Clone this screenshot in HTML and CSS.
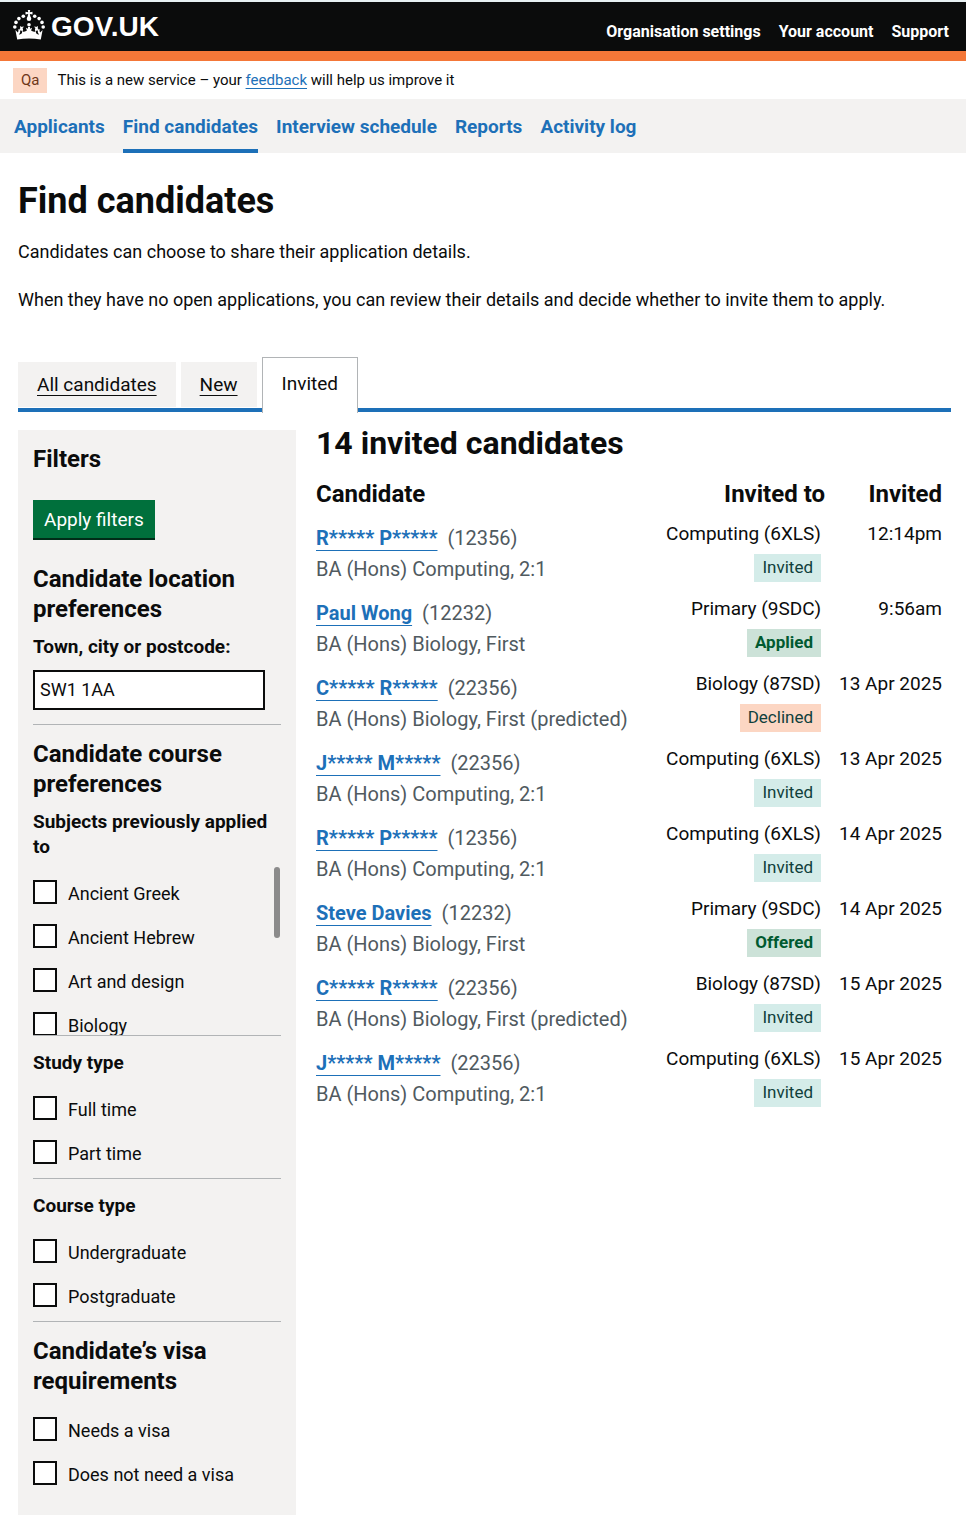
FILE: index.html
```html
<!DOCTYPE html>
<html lang="en">
<head>
<meta charset="utf-8">
<title>Find candidates - GOV.UK</title>
<meta name="viewport" content="width=device-width, initial-scale=1">
<link rel="stylesheet" href="styles.css">
</head>
<body>
<header class="header">
  <a class="brand" href="#">
    <svg class="crown" viewBox="0 0 32 30" width="32" height="30" fill="#fff" aria-hidden="true">
      <path d="M14.800 0h2.400l-.4 2.300 2.700-.5v2.800l-2.700-.5.800 3.400h-3.200l.8-3.400-2.700.5V1.800l2.700.5z"/>
      <circle cx="16" cy="8.800" r="2.300"/>
      <circle cx="10.300" cy="6.200" r="1.800"/><circle cx="21.700" cy="6.200" r="1.800"/>
      <circle cx="5.900" cy="8.600" r="1.800"/><circle cx="26.100" cy="8.600" r="1.800"/>
      <circle cx="3" cy="12.400" r="1.800"/><circle cx="29" cy="12.400" r="1.800"/>
      <circle cx="1.800" cy="17" r="1.800"/><circle cx="30.200" cy="17" r="1.800"/>
      <circle cx="16" cy="14.800" r="1.800"/>
      <path d="M4.200 29.500 2.400 20l2.500 2.400c.6-1.200.7-2.200.3-3.400 1.300.5 2 1.500 2 2.800 0 1.100-.6 2-1.400 2.600 1.300.3 2.700-.3 3.200-1.600.3-1-.1-1.900-.9-2.200-.8-.2-1.300.3-1.600.8-.5-1.500.1-2.700 1.100-3.400-.6-.4-.8-1.100-.5-1.800.7 0 1.300.2 1.700.8.500-.5 1.200-.7 1.900-.4-.1.700-.5 1.300-1.200 1.500.7.900.8 2.200-.1 3.300 1.700.5 3.400.2 4.500-.9l-1-2.700 2.100.9v-1.800h2v1.800l2.100-.9-1 2.700c1.100 1.100 2.800 1.400 4.500.9-.9-1.100-.8-2.400-.1-3.300-.7-.2-1.100-.8-1.200-1.500.7-.3 1.400-.1 1.900.4.400-.6 1-.8 1.700-.8.300.7.100 1.400-.5 1.800 1 .7 1.600 1.900 1.100 3.400-.3-.5-.8-1-1.600-.8-.8.300-1.200 1.200-.9 2.200.5 1.300 1.900 1.900 3.200 1.600-.8-.6-1.400-1.500-1.400-2.600 0-1.300.7-2.300 2-2.800-.4 1.200-.3 2.200.3 3.400l2.500-2.400-1.800 9.500c-7.600-1.300-16-1.300-23.600 0z"/>
    </svg>
    <span class="brand-name">GOV.UK</span>
  </a>
  <nav class="account-nav" aria-label="Account">
    <a href="#">Organisation settings</a>
    <a href="#">Your account</a>
    <a href="#">Support</a>
  </nav>
</header>
<div class="phase">
  <strong class="phase-tag">Qa</strong>
  <span>This is a new service – your <a class="link" href="#">feedback</a> will help us improve it</span>
</div>
<nav class="primary-nav" aria-label="Primary">
  <a href="#">Applicants</a>
  <a class="current" href="#" aria-current="page">Find candidates</a>
  <a href="#">Interview schedule</a>
  <a href="#">Reports</a>
  <a href="#">Activity log</a>
</nav>
<main class="main">
  <h1>Find candidates</h1>
  <p>Candidates can choose to share their application details.</p>
  <p>When they have no open applications, you can review their details and decide whether to invite them to apply.</p>
  <nav class="tabs" aria-label="Candidate lists">
    <a class="tab" href="#">All candidates</a>
    <a class="tab" href="#">New</a>
    <a class="tab selected" href="#" aria-current="page">Invited</a>
  </nav>
  <div class="columns">
    <form class="filters">
      <h2>Filters</h2>
      <button class="button" type="button">Apply filters</button>
      <section class="group first">
        <h2>Candidate location preferences</h2>
        <label class="field-label" for="town">Town, city or postcode:</label>
        <input class="text-input" id="town" type="text" value="SW1 1AA">
      </section>
      <section class="group course">
        <h2>Candidate course preferences</h2>
        <fieldset>
          <legend>Subjects previously applied to</legend>
          <div class="scroll-area">
            <div class="scroll-list">
              <div class="check"><input type="checkbox" id="greek"><label for="greek">Ancient Greek</label></div>
              <div class="check"><input type="checkbox" id="hebrew"><label for="hebrew">Ancient Hebrew</label></div>
              <div class="check"><input type="checkbox" id="art"><label for="art">Art and design</label></div>
              <div class="check"><input type="checkbox" id="biology"><label for="biology">Biology</label></div>
            </div>
            <span class="thumb"></span>
          </div>
        </fieldset>
      </section>
      <fieldset class="group">
        <legend>Study type</legend>
        <div class="checks">
          <div class="check"><input type="checkbox" id="full"><label for="full">Full time</label></div>
          <div class="check"><input type="checkbox" id="part"><label for="part">Part time</label></div>
        </div>
      </fieldset>
      <fieldset class="group">
        <legend>Course type</legend>
        <div class="checks">
          <div class="check"><input type="checkbox" id="under"><label for="under">Undergraduate</label></div>
          <div class="check"><input type="checkbox" id="post"><label for="post">Postgraduate</label></div>
        </div>
      </fieldset>
      <section class="group">
        <h2>Candidate’s visa requirements</h2>
        <div class="checks">
          <div class="check"><input type="checkbox" id="visa"><label for="visa">Needs a visa</label></div>
          <div class="check"><input type="checkbox" id="novisa"><label for="novisa">Does not need a visa</label></div>
        </div>
      </section>
    </form>
    <section class="results">
      <h2 class="results-title">14 invited candidates</h2>
      <table>
        <thead>
          <tr><th scope="col">Candidate</th><th scope="col" class="to">Invited to</th><th scope="col" class="when">Invited</th></tr>
        </thead>
        <tbody>
          <tr>
            <td><div class="who"><a href="#">R***** P*****</a><span>(12356)</span></div><div class="degree">BA (Hons) Computing, 2:1</div></td>
            <td class="to">Computing (6XLS)<div><span class="tag">Invited</span></div></td><td class="when">12:14pm</td>
          </tr>
          <tr>
            <td><div class="who"><a href="#">Paul Wong</a><span>(12232)</span></div><div class="degree">BA (Hons) Biology, First</div></td>
            <td class="to">Primary (9SDC)<div><strong class="tag green">Applied</strong></div></td><td class="when">9:56am</td>
          </tr>
          <tr>
            <td><div class="who"><a href="#">C***** R*****</a><span>(22356)</span></div><div class="degree">BA (Hons) Biology, First (predicted)</div></td>
            <td class="to">Biology (87SD)<div><span class="tag orange">Declined</span></div></td><td class="when">13 Apr 2025</td>
          </tr>
          <tr>
            <td><div class="who"><a href="#">J***** M*****</a><span>(22356)</span></div><div class="degree">BA (Hons) Computing, 2:1</div></td>
            <td class="to">Computing (6XLS)<div><span class="tag">Invited</span></div></td><td class="when">13 Apr 2025</td>
          </tr>
          <tr>
            <td><div class="who"><a href="#">R***** P*****</a><span>(12356)</span></div><div class="degree">BA (Hons) Computing, 2:1</div></td>
            <td class="to">Computing (6XLS)<div><span class="tag">Invited</span></div></td><td class="when">14 Apr 2025</td>
          </tr>
          <tr>
            <td><div class="who"><a href="#">Steve Davies</a><span>(12232)</span></div><div class="degree">BA (Hons) Biology, First</div></td>
            <td class="to">Primary (9SDC)<div><strong class="tag green">Offered</strong></div></td><td class="when">14 Apr 2025</td>
          </tr>
          <tr>
            <td><div class="who"><a href="#">C***** R*****</a><span>(22356)</span></div><div class="degree">BA (Hons) Biology, First (predicted)</div></td>
            <td class="to">Biology (87SD)<div><span class="tag">Invited</span></div></td><td class="when">15 Apr 2025</td>
          </tr>
          <tr>
            <td><div class="who"><a href="#">J***** M*****</a><span>(22356)</span></div><div class="degree">BA (Hons) Computing, 2:1</div></td>
            <td class="to">Computing (6XLS)<div><span class="tag">Invited</span></div></td><td class="when">15 Apr 2025</td>
          </tr>
        </tbody>
      </table>
    </section>
  </div>
</main>
</body>
</html>
```
FILE: styles.css
```css
* { box-sizing: border-box; }
body {
  margin: 0;
  color: #0b0c0c;
  background: #fff;
  font: 18px/25px Roboto, "Liberation Sans", sans-serif;
}
h1, h2, p { margin: 0; }
fieldset { border: 0; margin: 0; padding: 0; min-width: 0; }
legend { padding: 0; font-size: 19px; font-weight: 700; }

.header {
  display: flex;
  justify-content: space-between;
  align-items: center;
  height: 61px;
  padding: 0 17px 0 13px;
  border-top: 2px solid #e8f1f3;
  border-bottom: 10px solid #f47738;
  background: #0b0c0c;
}
.brand { display: flex; align-items: center; gap: 6px; color: #fff; text-decoration: none; }
.crown { margin-bottom: 4px; }
.brand-name { font: 700 28px/30px "Liberation Sans", sans-serif; }
.account-nav { display: flex; gap: 18px; padding-top: 10px; font-size: 16px; font-weight: 700; }
.account-nav a { color: #fff; text-decoration: none; }

.phase { display: flex; align-items: center; gap: 10px; height: 38px; padding: 0 13px; font-size: 15px; }
.phase-tag { padding: 0 8px; background: #fcd6c3; color: #6e3619; font-weight: 400; }
.link { color: #1d70b8; text-underline-offset: 3px; }

.primary-nav { display: flex; flex-wrap: wrap; gap: 0 18px; padding: 0 14px; background: #f3f2f1; font-size: 19px; font-weight: 700; }
.primary-nav a { padding: 15px 0 10px; border-bottom: 4px solid transparent; color: #1d70b8; text-decoration: none; }
.primary-nav .current { border-color: #1d70b8; }

.main { padding: 28px 15px 21px 18px; }
h1 { font-size: 36px; line-height: 40px; margin-bottom: 18px; }
p { margin-bottom: 23px; }

.tabs { display: flex; align-items: flex-end; gap: 5px; margin-top: 45px; border-bottom: 4px solid #1d70b8; font-size: 19px; }
.tab { padding: 10px 19px; margin-bottom: 1px; background: #f3f2f1; color: #0b0c0c; text-underline-offset: 4px; }
.tab.selected {
  margin-bottom: -5px;
  padding: 13px 19px 17px;
  border: 1px solid #b1b4b6;
  border-bottom: 0;
  background: #fff;
  text-decoration: none;
}

.columns { display: flex; align-items: flex-start; gap: 20px; margin-top: 18px; }
.filters { flex: 0 0 278px; padding: 14px 15px 20px; background: #f3f2f1; }
.filters h2 { font-size: 24px; line-height: 30px; }
.button {
  display: block;
  height: 38px;
  margin: 26px 0 26px;
  padding: 0 11px;
  border: 0;
  box-shadow: 0 2px 0 #002d18;
  background: #00703c;
  color: #fff;
  font: inherit;
  font-size: 19px;
}
.group { padding-top: 14px; border-top: 1px solid #b1b4b6; }
.group.first { padding: 0 0 14px; border: 0; }
.group legend { float: left; width: 100%; }
.group legend + * { clear: both; }
.field-label { display: block; margin: 10px 0 11px; font-size: 19px; font-weight: 700; }
.text-input {
  display: block;
  width: 232px;
  height: 40px;
  padding: 0 5px 1px;
  border: 2px solid #0b0c0c;
  border-radius: 0;
  background: #fff;
  color: #0b0c0c;
  font: inherit;
}
.course fieldset { padding-top: 10px; }
.scroll-area { position: relative; padding-top: 8px; }
.scroll-list { height: 168px; padding-top: 3px; overflow: hidden; }
.thumb { position: absolute; top: 8px; right: 1px; width: 6px; height: 71px; border-radius: 3px; background: #8b8b8b; }
.checks { padding: 11px 0 4px; }
.check { display: flex; align-items: center; gap: 11px; height: 44px; }
.check input {
  appearance: none;
  width: 24px;
  height: 24px;
  margin: 0;
  border: 2px solid #0b0c0c;
  background: #fff;
}
.check input:checked { background: #0b0c0c; box-shadow: inset 0 0 0 4px #fff; }
.check label { padding-top: 3px; }
.group:last-child .checks { padding-bottom: 0; }

.results { flex: 1; min-width: 0; }
.results-title { font-size: 32px; line-height: 26px; margin-bottom: 23px; }
table { width: 100%; border-collapse: collapse; }
th { padding: 0 0 12px; font-size: 24px; line-height: 30px; text-align: left; }
td { height: 75px; padding: 0; vertical-align: top; white-space: nowrap; font-size: 19px; }
.to { text-align: right; }
td.to { padding-right: 4px; }
.when { width: 126px; padding-left: 14px; padding-right: 9px; text-align: right; }
.who { display: flex; gap: 10px; padding-top: 5px; font-size: 20px; }
.who a { color: #1d70b8; font-weight: 700; text-decoration-thickness: 1px; text-underline-offset: 5px; }
.who span, .degree { color: #505a5f; }
.degree { padding-top: 6px; font-size: 20px; }
.tag { display: inline-block; margin-top: 8px; padding: 1px 8px 2px; background: #d4ece9; color: #10403c; font-size: 17px; }
.tag.green { background: #cce2d8; color: #005a30; }
.tag.orange { background: #fcd6c3; }
```
